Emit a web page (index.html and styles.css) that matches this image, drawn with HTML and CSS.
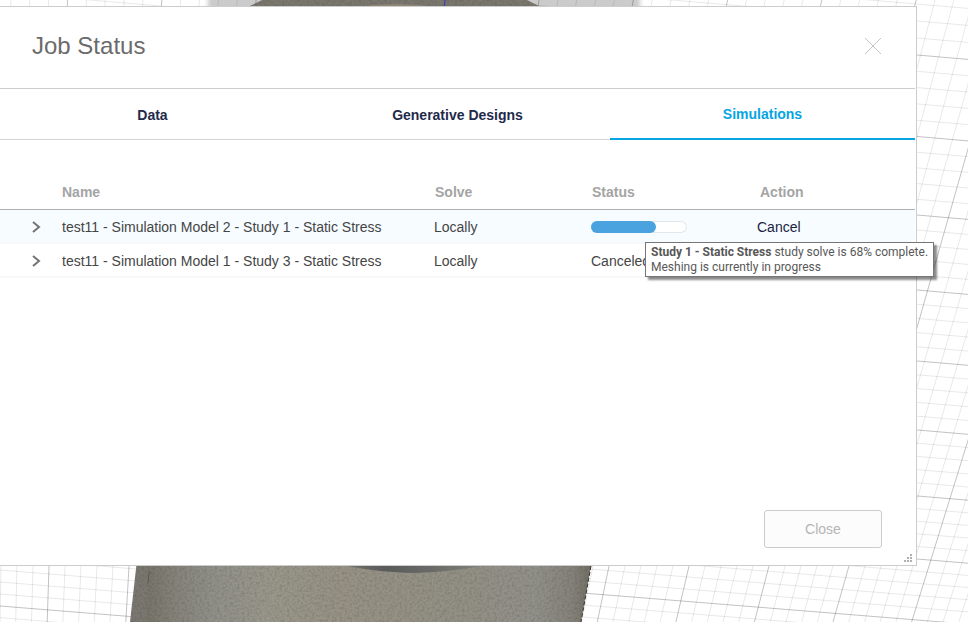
FILE: index.html
```html
<!DOCTYPE html>
<html lang="en">
<head>
<meta charset="utf-8">
<title>Job Status</title>
<link rel="stylesheet" href="styles.css">
</head>
<body>
<svg class="viewport" viewBox="0 0 968 622" preserveAspectRatio="xMinYMin slice" aria-hidden="true">
  <defs>
    <linearGradient id="metal" x1="130" x2="591" y1="0" y2="0" gradientUnits="userSpaceOnUse">
      <stop offset="0" stop-color="#7a7871"/>
      <stop offset="0.035" stop-color="#7a7870"/>
      <stop offset="0.04" stop-color="#78756a"/>
      <stop offset="0.1" stop-color="#85837b"/>
      <stop offset="0.18" stop-color="#90908a"/>
      <stop offset="0.3" stop-color="#99978b"/>
      <stop offset="0.45" stop-color="#979285"/>
      <stop offset="0.72" stop-color="#939085"/>
      <stop offset="0.88" stop-color="#91908a"/>
      <stop offset="0.96" stop-color="#84827a"/>
      <stop offset="1" stop-color="#716e64"/>
    </linearGradient>
    <linearGradient id="rim" x1="340" x2="490" y1="0" y2="0" gradientUnits="userSpaceOnUse">
      <stop offset="0" stop-color="#77766f"/>
      <stop offset="0.3" stop-color="#595b5b"/>
      <stop offset="0.6" stop-color="#696a68"/>
      <stop offset="1" stop-color="#85837b"/>
    </linearGradient>
    <filter id="grain" x="0" y="0" width="1" height="1" color-interpolation-filters="sRGB">
      <feTurbulence type="fractalNoise" baseFrequency="0.4" numOctaves="2" seed="4" result="n"/>
      <feColorMatrix in="n" values="0 0 0 0 0.25  0 0 0 0 0.24  0 0 0 0 0.2  0.5 0 0 0 -0.2" result="g"/>
      <feComposite in="g" in2="SourceGraphic" operator="in" result="c"/>
      <feMerge><feMergeNode in="SourceGraphic"/><feMergeNode in="c"/></feMerge>
    </filter>
    <filter id="soft"><feGaussianBlur stdDeviation="2 0"/></filter>
  </defs>
  <rect x="208" y="-10" width="432" height="30" fill="#cbcbcb" filter="url(#soft)"/>
  <path id="minor" class="grid-minor"/>
  <path id="major" class="grid-major"/>
  <path d="M262 0H527L543 8H246Z" fill="#7a776e" filter="url(#grain)"/>
  <path d="M355 7Q395 1 438 7Z" fill="#8d8577"/>
  <path d="M445 0L444 8" stroke="#3a35c8"/>
  <path d="M137 560H592L581 622H130Z" fill="url(#metal)" filter="url(#grain)"/>
  <path d="M149 571L148 584" stroke="#5d5c54"/>
  <path d="M340 564Q370 572 415 573Q455 572 490 564Z" fill="url(#rim)"/>
  <path d="M591 566L581 622" stroke="#35332d" stroke-dasharray="4 2"/>
</svg>

<main class="dialog">
  <header class="dialog-header">
    <h1>Job Status</h1>
    <button class="dismiss" type="button" aria-label="Dismiss">
      <svg width="18" height="18" viewBox="0 0 18 18"><path d="M1 1L17 17M17 1L1 17"/></svg>
    </button>
  </header>
  <nav class="tabs">
    <a href="#data">Data</a>
    <a href="#designs">Generative Designs</a>
    <a href="#simulations" class="active">Simulations</a>
  </nav>
  <table class="jobs">
    <thead>
      <tr><th class="col-toggle"></th><th class="col-name">Name</th><th class="col-solve">Solve</th><th class="col-status">Status</th><th class="col-action">Action</th></tr>
    </thead>
    <tbody>
      <tr class="hovered">
        <td><button class="toggle" type="button" aria-label="Expand"><svg width="10" height="12" viewBox="0 0 10 12"><path d="M1 1L7 6L1 11"/></svg></button></td>
        <td>test11 - Simulation Model 2 - Study 1 - Static Stress</td>
        <td>Locally</td>
        <td class="status-cell">
          <div class="progress"><div class="progress-fill" style="width: 68%"></div></div>
          <div class="tooltip" role="tooltip"><b>Study 1 - Static Stress</b> study solve is 68% complete.<br>Meshing is currently in progress</div>
        </td>
        <td><button class="cancel" type="button">Cancel</button></td>
      </tr>
      <tr>
        <td><button class="toggle" type="button" aria-label="Expand"><svg width="10" height="12" viewBox="0 0 10 12"><path d="M1 1L7 6L1 11"/></svg></button></td>
        <td>test11 - Simulation Model 1 - Study 3 - Static Stress</td>
        <td>Locally</td>
        <td>Canceled</td>
        <td></td>
      </tr>
    </tbody>
  </table>
  <footer class="dialog-footer">
    <button class="close" type="button">Close</button>
  </footer>
  <svg class="grip" width="8" height="8" viewBox="0 0 8 8" aria-hidden="true"><path d="M6 0h2v2h-2zM3 3h2v2h-2zM6 3h2v2h-2zM0 6h2v2h-2zM3 6h2v2h-2zM6 6h2v2h-2z"/></svg>
</main>
<script src="grid.js"></script>
</body>
</html>
```
FILE: styles.css
```css
* { box-sizing: border-box; }

body {
  margin: 0;
  min-height: 100vh;
  display: flex;
  flex-direction: column;
  overflow: hidden;
  background: #fff;
  color: #454545;
  font: 14px/18px "Liberation Sans", Arial, sans-serif;
}

button {
  padding: 0;
  border: 0;
  background: none;
  font: inherit;
  color: inherit;
}

.viewport {
  position: absolute;
  inset: 0;
  width: 100%;
  height: 100%;
  z-index: -1;
}

.grid-minor, .grid-major { fill: none; stroke: #000; }
.grid-minor { stroke-opacity: 0.09; }
.grid-major { stroke-opacity: 0.24; }

.dialog {
  position: relative;
  flex: 1;
  display: flex;
  flex-direction: column;
  margin: 6px 51px 56px 0;
  padding-right: 1px;
  background: #fff;
  border: 1px solid #ccc;
  border-left: 0;
}

.dialog-header {
  display: flex;
  align-items: center;
  justify-content: space-between;
  height: 82px;
  padding: 0 33px 4px 32px;
  border-bottom: 1px solid #ccc;
}

h1 {
  margin: 0;
  font-size: 24px;
  line-height: 28px;
  font-weight: 400;
  color: #6b6b6b;
}

.dismiss { display: flex; }
.dismiss path { fill: none; stroke: #c4c4c4; }

.tabs {
  display: grid;
  grid-template-columns: repeat(3, 1fr);
  height: 51px;
  border-bottom: 1px solid #d4d4d4;
}

.tabs a {
  display: flex;
  align-items: center;
  justify-content: center;
  margin-bottom: -1px;
  color: #1f2a4c;
  font-weight: 700;
  text-decoration: none;
}

.tabs .active {
  color: #06a5e1;
  border-bottom: 2px solid #06a5e1;
}

.jobs {
  width: 100%;
  margin-top: 35px;
  border-collapse: separate;
  border-spacing: 0;
  table-layout: fixed;
}

th {
  height: 35px;
  padding: 0 0 0 1px;
  border-bottom: 1px solid #adb0b1;
  color: #a4a4a4;
  text-align: left;
}

td {
  height: 34px;
  padding: 2px 0 0;
  border-bottom: 2px solid #f6f8f9;
  white-space: nowrap;
}

.col-toggle { width: 62px; }
.col-name { padding-left: 0; }
.col-solve { width: 157px; }
.col-status { width: 166px; }
.col-action { width: 158px; padding-left: 3px; }

.hovered td { background: #f6fcff; }

.toggle { display: flex; padding-left: 32px; }
.toggle path { fill: none; stroke: #737373; stroke-width: 2; }

.status-cell { position: relative; }

.progress {
  width: 96px;
  height: 12px;
  background: #fff;
  border-radius: 6px;
  box-shadow: inset 0 0 0 1px #e4e6e7;
}

.progress-fill {
  height: 12px;
  border-radius: 6px;
  background: #4aa3df;
}

.tooltip {
  position: absolute;
  top: 32px;
  left: 54px;
  padding: 2px 5px 1px;
  border: 1px solid #767676;
  background: #fff;
  box-shadow: 3px 3px 2px rgba(0, 0, 0, 0.45);
  color: #575757;
  font: 12px/15px Roboto, "Open Sans", sans-serif;
}

.cancel { color: #1b2440; }

.dialog-footer {
  display: flex;
  justify-content: flex-end;
  margin-top: auto;
  padding: 0 33px 17px;
}

.close {
  width: 118px;
  height: 38px;
  border: 1px solid #ccc;
  border-radius: 3px;
  background: #fcfcfc;
  color: #b5b5b5;
}

.grip {
  position: absolute;
  right: 4px;
  bottom: 3px;
  fill: #b0b0b0;
}
```
FILE: grid.js
```js
// Perspective floor grid: every fifth line is a major one.
const paths = { minor: "", major: "" };
const add = (step, d) => { paths[step % 5 === 0 ? "major" : "minor"] += d; };

for (let s = -5; s <= 70; s++) {
  const top = 67.5 + 94.3 * s / 5;
  const low = 49 + 80 * s / 5;
  const end = low + (low - top) * 56 / 566;
  add(s, `M${top.toFixed(1)} 0L${end.toFixed(1)} 622`);
}

// Heights of the major rows at the left (x = 0) and right (x = 917) ends.
const rows = [[-108, -30], [-24, 55], [57, 136.5], [136, 215], [211, 290], [283, 361],
  [352, 430], [420, 496], [484, 559], [546, 620], [606, 680], [664, 738]];
rows.slice(0, -1).forEach(([l, r], i) => {
  const [l2, r2] = rows[i + 1];
  for (let k = 0; k < 5; k++) {
    const a = l + (l2 - l) * k / 5;
    const b = r + (r2 - r) * k / 5;
    add(k, `M0 ${a.toFixed(1)}L968 ${(b + (b - a) * 51 / 917).toFixed(1)}`);
  }
});

document.getElementById("minor").setAttribute("d", paths.minor);
document.getElementById("major").setAttribute("d", paths.major);
```
